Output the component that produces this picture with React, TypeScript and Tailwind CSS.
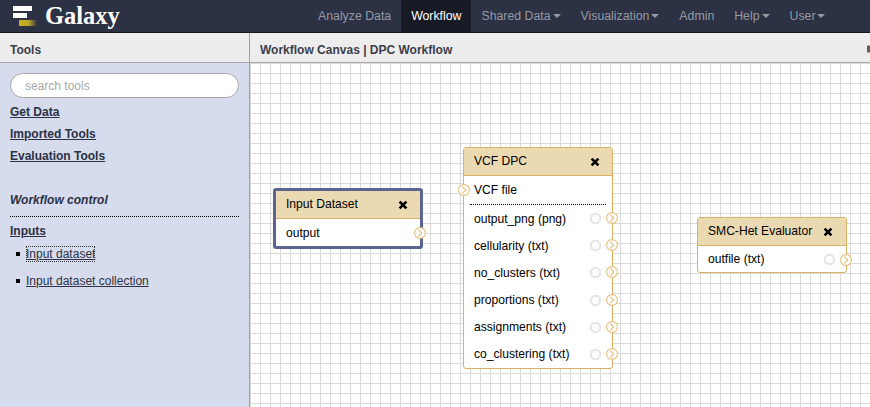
function Port({ className }: { className: string }) {
  return (
    <span className={`absolute w-3 h-3 ${className}`}>
      <svg viewBox="0 0 12 12" className="w-3 h-3 block">
        <circle cx="6" cy="6" r="5.4" fill="#fff" stroke="#e3bf7c" strokeWidth="1.1" />
        <path d="M4.2 2.6 7.8 6 4.2 9.4" fill="none" stroke="#e3bf7c" strokeWidth="1.1" />
      </svg>
    </span>
  );
}

function Callout() {
  return (
    <svg viewBox="0 0 11 11" className="w-[11px] h-[11px] block">
      <path d="M3.5 1h4l2.5 2.5v4L7.5 10h-4L1 7.5v-4z" fill="#fff" stroke="#e6e6e6" strokeWidth="2" />
    </svg>
  );
}

function Close() {
  return (
    <svg viewBox="0 0 10 10" className="w-[10px] h-[10px] block">
      <path d="M1.6 1.6 8.4 8.4M8.4 1.6 1.6 8.4" stroke="#000" strokeWidth="2.7" />
    </svg>
  );
}

function NavLink({ label, caret, active }: { label: string; caret?: boolean; active?: boolean }) {
  return (
    <div className={`h-full flex items-center px-[10px] ${active ? 'bg-[#181b25] text-white' : 'text-[#949aa6]'}`}>
      {label}
      {caret && <span className="ml-[2px] w-0 h-0 border-x-[4px] border-x-transparent border-t-[4px] border-t-[#949aa6]" />}
    </div>
  );
}

const outputs = ['output_png (png)', 'cellularity (txt)', 'no_clusters (txt)', 'proportions (txt)', 'assignments (txt)', 'co_clustering (txt)'];

export default function App() {
  return (
    <div className="w-[870px] h-[407px] overflow-hidden flex flex-col bg-white text-[12px] text-[#2c3143] font-['Liberation_Sans',Arial,sans-serif]">
      <header className="h-[33px] shrink-0 bg-[#2c3143] border-b border-[#14161e] flex items-center">
        <div className="w-[308px] flex items-center pl-[13px] gap-[8px]">
          <svg viewBox="0 0 24 22" className="w-6 h-[22px] block">
            <defs>
              <linearGradient id="gold" x1="0" x2="1" y1="0" y2="0">
                <stop offset="0" stopColor="#c8b21f" />
                <stop offset="0.55" stopColor="#b9a52a" />
                <stop offset="1" stopColor="#2c3143" />
              </linearGradient>
            </defs>
            <rect x="0" y="1" width="19" height="5" fill="#fff" />
            <rect x="0" y="8" width="14" height="5" fill="#fff" />
            <rect x="6" y="15" width="18" height="6" fill="url(#gold)" />
          </svg>
          <span className="text-[24.5px] leading-none font-bold text-white font-['Liberation_Serif',serif]">Galaxy</span>
        </div>
        <nav className="h-full flex items-center text-[12.3px]">
          <NavLink label="Analyze Data" />
          <NavLink label="Workflow" active />
          <NavLink label="Shared Data" caret />
          <NavLink label="Visualization" caret />
          <NavLink label="Admin" />
          <NavLink label="Help" caret />
          <NavLink label="User" caret />
        </nav>
      </header>

      <div className="flex-1 flex min-h-0">
        <aside className="w-[250px] shrink-0 border-r border-[#a0a0a0] bg-[#d6dcee] flex flex-col">
          <div className="h-[30px] shrink-0 bg-[#ededed] border-b border-[#a8a8a8] flex items-center px-[10px] pt-[4px] font-bold text-[#3b3e4a]">Tools</div>
          <div className="px-[10px] pt-[10px]">
            <div className="h-[25px] w-[229px] rounded-full border border-[#a8a8a8] bg-white flex items-center pl-[14px] text-[#a8a8a8]">search tools</div>
            <div className="mt-[6px] flex flex-col gap-[6px] font-bold underline leading-[16px]">
              <a>Get Data</a>
              <a>Imported Tools</a>
              <a>Evaluation Tools</a>
            </div>
            <div className="mt-[28px] pb-[8px] border-b border-dotted border-black font-bold italic leading-[16px]">Workflow control</div>
            <div className="mt-[6px] font-bold underline leading-[16px]">Inputs</div>
            <ul className="mt-[7px] flex flex-col gap-[11px] leading-[16px]">
              <li className="flex items-center"><span className="ml-[6px] mr-[6px] w-[4px] h-[4px] bg-black" /><a className="underline outline-1 outline-dotted outline-[#333] -outline-offset-1">Input dataset</a></li>
              <li className="flex items-center"><span className="ml-[6px] mr-[6px] w-[4px] h-[4px] bg-black" /><a className="underline">Input dataset collection</a></li>
            </ul>
          </div>
        </aside>

        <main className="flex-1 min-w-0 flex flex-col">
          <div className="h-[30px] shrink-0 bg-[#ededed] border-b border-[#a8a8a8] flex items-center px-[10px] pt-[4px] font-bold text-[#3b3e4a] relative">
            Workflow Canvas | DPC Workflow
            <span className="absolute right-0 top-[12px] w-[3px] h-[8px] bg-[#6b5f55] border-y border-[#c8a878]" />
          </div>
          <div className="relative flex-1 bg-white bg-[linear-gradient(#dadada_1px,transparent_1px),linear-gradient(90deg,#dadada_1px,transparent_1px)] bg-[length:10px_10px]">
            {/* nodes sit on the free canvas */}
            <section className="absolute left-[23px] top-[125px] w-[150px] rounded-[3px] border-[3px] border-[#5c6590] bg-white text-black text-[12.1px]">
              <div className="h-[28px] bg-[#ebd9b2] border-b border-[#d8b365] flex items-center justify-between pl-[10px] pr-[12px]">Input Dataset <Close /></div>
              <div className="relative h-[27px] pt-px flex items-center pl-[10px]">output<Port className="right-[-6px] top-[8px]" /></div>
            </section>

            <section className="absolute left-[213px] top-[84px] w-[150px] rounded-[3px] border border-[#d8b365] bg-white text-black text-[12.1px]">
              <div className="h-[28px] bg-[#ebd9b2] border-b border-[#d8b365] flex items-center justify-between pl-[10px] pr-[12px]">VCF DPC <Close /></div>
              <div className="relative h-[28px] flex items-center pl-[10px]">VCF file<Port className="left-[-6px] top-[8px]" /></div>
              <div className="mx-[6px] border-t border-dotted border-black" />
              <div>
                {outputs.map((name) => (
                  <div key={name} className="relative h-[27.2px] flex items-center pl-[10px]">
                    {name}
                    <span className="absolute right-[11px] top-[8px]"><Callout /></span>
                    <Port className="right-[-6px] top-[7px]" />
                  </div>
                ))}
              </div>
            </section>

            <section className="absolute left-[447px] top-[154px] w-[150px] rounded-[3px] border border-[#d8b365] bg-white text-black text-[12.1px]">
              <div className="h-[28px] bg-[#ebd9b2] border-b border-[#d8b365] flex items-center justify-between pl-[10px] pr-[13px]">SMC-Het Evaluator <Close /></div>
              <div className="relative h-[26px] pt-px flex items-center pl-[10px]">
                outfile (txt)
                <span className="absolute right-[11px] top-[8px]"><Callout /></span>
                <Port className="right-[-6px] top-[8px]" />
              </div>
            </section>
          </div>
        </main>
      </div>
    </div>
  );
}
